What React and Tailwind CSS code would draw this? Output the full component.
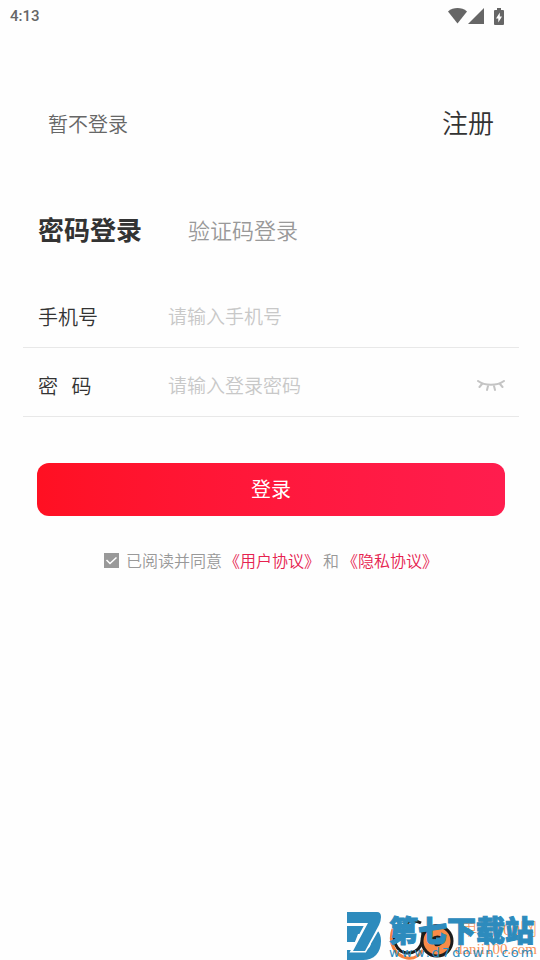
import { useState } from "react";

function StatusBar() {
  return (
    <div className="flex h-8 items-center justify-between pl-[10px] pr-9 text-[#666]">
      <span className="font-['Roboto',sans-serif] text-[15px] font-medium leading-5">4:13</span>
      <div className="flex items-center">
        <svg className="h-4 w-[19px]" viewBox="0 0 19 16" fill="currentColor" aria-hidden="true">
          <path d="M0 3.4C5.5-1 13.500-1 19 3.400L9.500 15.500Z" />
        </svg>
        <svg className="ml-px h-4 w-4" viewBox="0 0 16 16" fill="currentColor" aria-hidden="true">
          <path d="M16 0V16H0Z" />
        </svg>
        <svg className="ml-[10px] h-[17px] w-[10px]" viewBox="0 0 10 17" aria-hidden="true">
          <path d="M3 0H7V2H9Q10 2 10 3V16Q10 17 9 17H1Q0 17 0 16V3Q0 2 1 2H3Z" fill="currentColor" />
          <path d="M5.800 4.500L2 10.500H4.300V14.500L8 8.500H5.800Z" fill="#fff" />
        </svg>
      </div>
    </div>
  );
}

function Field({ id, label, children, ...input }) {
  return (
    <div className="flex h-[69px] items-center border-b border-[#e8e8e8] pl-[15px] pr-[14px] pt-1">
      <label htmlFor={id} className="w-[130px] shrink-0 whitespace-pre pt-1 text-xl font-[350] leading-7 text-[#333]">
        {label}
      </label>
      <input
        id={id}
        className="h-10 min-w-0 flex-1 bg-transparent text-[19px] font-[350] text-[#333] outline-none placeholder:text-[#c8c8c8]"
        {...input}
      />
      {children}
    </div>
  );
}

function SiteMark() {
  return (
    <div className="absolute bottom-0 right-0 h-12 w-[194px]" aria-hidden="true">
      <svg className="absolute bottom-0 left-[42px] h-[46px] w-[68px]" viewBox="0 0 68 46">
        <path d="M5 15C0 29 7 42 19 44Q28 46 35 36" fill="none" stroke="#f5813c" strokeWidth="3" />
        <path d="M9 13C2 26 9 39 20 39C32 39 37 27 34 15M40 15Q46 10 54 13" fill="none" stroke="#1c1c1c" strokeWidth="3" />
        <path d="M16 11Q24 4 33 9" fill="none" stroke="#1c1c1c" strokeWidth="3" />
        <circle cx="49" cy="27" r="15" fill="#f98b48" stroke="#1c1c1c" strokeWidth="3" />
        <path d="M43 24Q49 19 57 24Q54 34 47 32Z" fill="#1c1c1c" />
        <path d="M48 25H56" stroke="#2d8bbd" strokeWidth="3" />
      </svg>
      <div className="absolute right-[3px] top-[7px] flex flex-col items-end font-['Liberation_Serif','Noto_Sans_CJK_SC',serif] text-[#f6935c]">
        <span className="text-[17px] font-light leading-[22px]">单机100网</span>
        <span className="text-[15px] leading-4">danji100.com</span>
      </div>
      <svg className="absolute left-0 top-0 h-12 w-9" viewBox="0 0 36 48" fill="#2d8bbd">
        <path d="M1 14H20C30 14 35 20 35 29C35 41 28 48 17 48H1V38H16C22 38 25 35 25 30C25 25 22 22 16 22H12L9 30H1Z" />
        <path d="M1 11H21L6 39H19L34 13" fill="none" stroke="#fefefe" strokeWidth="3" />
        <path d="M1 0H31Q35 0 35 5Q35 9 33 13L19 39H7L22 11H1Z" />
      </svg>
      <div className="absolute left-[43px] top-0 flex flex-col text-[#2d8bbd]">
        <span className="whitespace-nowrap text-[29px] font-black leading-[34px] [-webkit-text-stroke:1px_#2d8bbd]">第七下载站</span>
        <span className="font-['DejaVu_Sans',sans-serif] text-[13px] leading-[14px] tracking-[2px]">www.d7down.com</span>
      </div>
    </div>
  );
}

export default function App() {
  const [agreed, setAgreed] = useState(true);
  const [visible, setVisible] = useState(false);

  return (
    <main className="relative min-h-screen bg-[#fefefe] font-['Noto_Sans_CJK_SC',sans-serif]">
      <StatusBar />

      <header className="mt-[70px] flex h-10 items-center justify-between pl-12 pr-[46px]">
        <button type="button" className="pt-[3px] text-xl font-[350] text-[#666]">暂不登录</button>
        <button type="button" className="text-[26px] font-[350] leading-10 text-[#333]">注册</button>
      </header>

      <nav className="mt-[67px] flex h-10 items-center gap-[46px] pl-[38px]">
        <button type="button" className="text-[26px] font-bold leading-10 text-[#333]">密码登录</button>
        <button type="button" className="text-[22px] font-[350] leading-10 text-[#999]">验证码登录</button>
      </nav>

      <form onSubmit={(e) => e.preventDefault()}>
        <div className="ml-[23px] mr-[21px] mt-[30px]">
          <Field id="phone" label="手机号" type="tel" placeholder="请输入手机号" />
          <Field id="password" label="密   码" type={visible ? "text" : "password"} placeholder="请输入登录密码">
            <button type="button" aria-label="显示密码" className="pt-1" onClick={() => setVisible(!visible)}>
              <svg className="h-3 w-7" viewBox="0 0 28 12" fill="none" stroke="#c4c4c4" strokeWidth="2" strokeLinecap="round">
                <path d="M1 1C8 6 20 6 27 1M5 4L2.500 7M11 6L10 10M17 6L18 10M23 4L25.500 7" />
              </svg>
            </button>
          </Field>
        </div>

        <div className="ml-[37px] mr-[35px] mt-[46px]">
          <button
            type="submit"
            className="flex h-[53px] w-full items-center justify-center rounded-xl bg-linear-to-r from-[#ff1022] to-[#ff1d4e] pb-[2px] text-xl text-white"
          >
            登录
          </button>
        </div>

        <div className="mt-8 flex h-6 items-center justify-center pl-[2px] text-base font-[350] leading-6 text-[#999]">
          <span className="relative mr-[7px] flex h-[15px] w-[15px]">
            <input
              id="agree"
              type="checkbox"
              checked={agreed}
              onChange={(e) => setAgreed(e.target.checked)}
              className="h-[15px] w-[15px] appearance-none border border-[#999] checked:bg-[#999]"
            />
            {agreed && (
              <svg className="pointer-events-none absolute inset-0 h-[15px] w-[15px]" viewBox="0 0 15 15" fill="none" stroke="#fff" strokeWidth="1.500">
                <path d="M2.500 7L6 10.500L12.500 4.500" />
              </svg>
            )}
          </span>
          <label htmlFor="agree">已阅读并同意</label>
          <a href="#terms" className="ml-[2px] text-[#e6224f]">《用户协议》</a>
          <span className="mx-[3px]">和</span>
          <a href="#privacy" className="text-[#e6224f]">《隐私协议》</a>
        </div>
      </form>

      <SiteMark />
    </main>
  );
}
